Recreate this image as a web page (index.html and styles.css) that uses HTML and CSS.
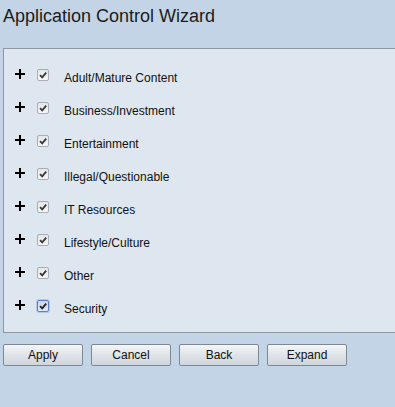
FILE: index.html
```html
<!DOCTYPE html>
<html lang="en">

<head>
    <meta charset="UTF-8">
    <title>Application Control Wizard</title>
    <link rel="stylesheet" href="styles.css">
</head>

<body>
    <h1 class="page-title">Application Control Wizard</h1>

    <div class="category-panel">
        <div class="category-row">
            <span class="expander"></span>
            <span class="check"><svg viewBox="0 0 10 10"><path d="M2 5.2 L4.2 7.4 L8.2 2.6" /></svg></span>
            <span class="label">Adult/Mature Content</span>
        </div>
        <div class="category-row">
            <span class="expander"></span>
            <span class="check"><svg viewBox="0 0 10 10"><path d="M2 5.2 L4.2 7.4 L8.2 2.6" /></svg></span>
            <span class="label">Business/Investment</span>
        </div>
        <div class="category-row">
            <span class="expander"></span>
            <span class="check"><svg viewBox="0 0 10 10"><path d="M2 5.2 L4.2 7.4 L8.2 2.6" /></svg></span>
            <span class="label">Entertainment</span>
        </div>
        <div class="category-row">
            <span class="expander"></span>
            <span class="check"><svg viewBox="0 0 10 10"><path d="M2 5.2 L4.2 7.4 L8.2 2.6" /></svg></span>
            <span class="label">Illegal/Questionable</span>
        </div>
        <div class="category-row">
            <span class="expander"></span>
            <span class="check"><svg viewBox="0 0 10 10"><path d="M2 5.2 L4.2 7.4 L8.2 2.6" /></svg></span>
            <span class="label">IT Resources</span>
        </div>
        <div class="category-row">
            <span class="expander"></span>
            <span class="check"><svg viewBox="0 0 10 10"><path d="M2 5.2 L4.2 7.4 L8.2 2.6" /></svg></span>
            <span class="label">Lifestyle/Culture</span>
        </div>
        <div class="category-row">
            <span class="expander"></span>
            <span class="check"><svg viewBox="0 0 10 10"><path d="M2 5.2 L4.2 7.4 L8.2 2.6" /></svg></span>
            <span class="label">Other</span>
        </div>
        <div class="category-row">
            <span class="expander"></span>
            <span class="check focused"><svg viewBox="0 0 10 10"><path d="M2 5.2 L4.2 7.4 L8.2 2.6" /></svg></span>
            <span class="label">Security</span>
        </div>
    </div>

    <div class="button-bar">
        <button class="btn">Apply</button>
        <button class="btn">Cancel</button>
        <button class="btn">Back</button>
        <button class="btn">Expand</button>
    </div>
</body>

</html>
```

FILE: styles.css
```css
body {
    margin: 0;
    padding: 0;
    background-color: #c2d4e6;
    font-family: "Liberation Sans", Arial, sans-serif;
    color: #111;
}

.page-title {
    margin: 0;
    padding: 6px 0 0 3px;
    height: 48px;
    box-sizing: border-box;
    font-size: 18px;
    font-weight: normal;
    line-height: 21px;
    color: #1c1c1c;
}

/* panel runs off the right edge in the original, so no right border */
.category-panel {
    margin-left: 3px;
    background-color: #dee7f0;
    border: 1px solid #8d98a3;
    border-right: none;
    padding: 12px 0 7px 0;
}

.category-row {
    display: flex;
    align-items: flex-start;
    height: 33px;
}

.expander {
    position: relative;
    width: 10px;
    height: 10px;
    margin: 8px 0 0 11px;
}

.expander::before,
.expander::after {
    content: "";
    position: absolute;
    background-color: #000;
}

.expander::before {
    left: 0;
    top: 4px;
    width: 10px;
    height: 2px;
}

.expander::after {
    left: 4px;
    top: 0;
    width: 2px;
    height: 10px;
}

.check {
    width: 10px;
    height: 10px;
    margin: 8px 0 0 12px;
    border: 1px solid #a9aeb4;
    border-radius: 2px;
    background: linear-gradient(#e4e6e8, #f6f7f8);
    display: flex;
}

.check svg {
    width: 10px;
    height: 10px;
}

.check path {
    fill: none;
    stroke: #3a3a3a;
    stroke-width: 1.8;
}

.check.focused {
    border-color: #5c7fc6;
    background: linear-gradient(#c9d8ef, #dfe8f6);
    box-shadow: 0 0 0 1px #b5c8e8;
}

.check.focused path {
    stroke: #222;
}

.label {
    margin: 10px 0 0 15px;
    font-size: 12px;
    line-height: 14px;
    color: #111;
}

.button-bar {
    display: flex;
    gap: 8px;
    padding: 11px 0 0 3px;
}

.btn {
    width: 80px;
    height: 22px;
    margin: 0;
    padding: 0;
    font-family: "Liberation Sans", Arial, sans-serif;
    font-size: 12px;
    color: #111;
    border: 1px solid #7e8893;
    border-radius: 2px;
    background: linear-gradient(#f4f6f8, #dfe4e9 50%, #cfd6dd);
}
```
